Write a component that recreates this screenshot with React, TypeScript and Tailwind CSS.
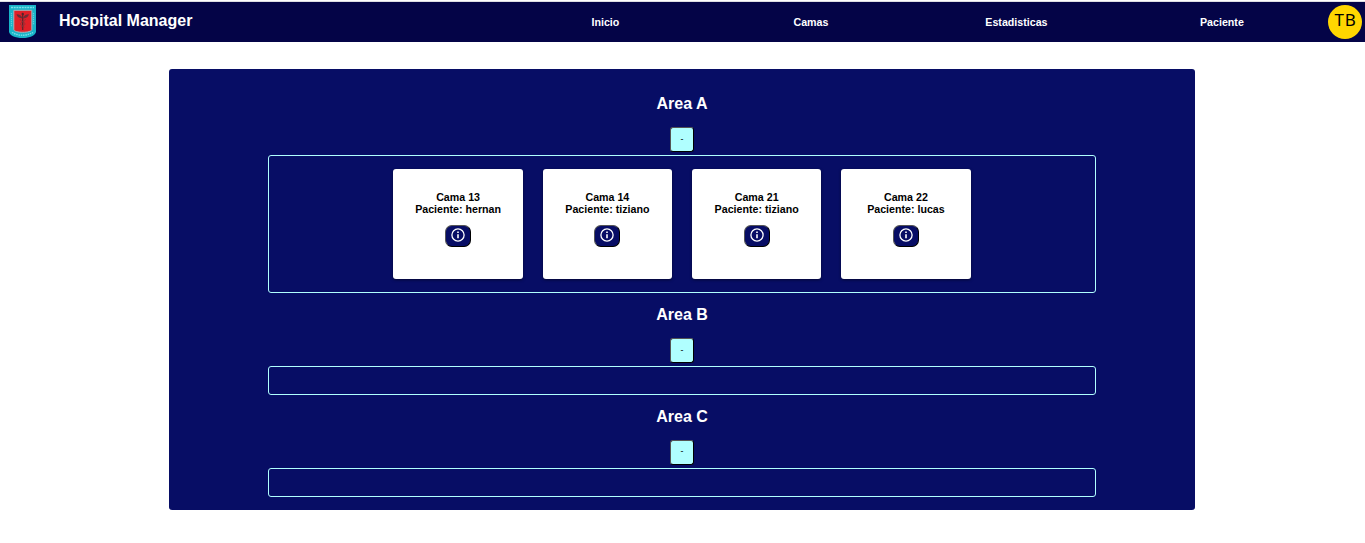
type Bed = { id: number; patient: string };

const areas: { name: string; top: string; gap: string; boxGap: string; beds: Bed[] }[] = [
  {
    name: "Area A",
    top: "pt-[25px]",
    gap: "mt-[13px]",
    boxGap: "mt-[3px]",
    beds: [
      { id: 13, patient: "hernan" },
      { id: 14, patient: "tiziano" },
      { id: 21, patient: "tiziano" },
      { id: 22, patient: "lucas" },
    ],
  },
  { name: "Area B", top: "pt-[12px]", gap: "mt-[13px]", boxGap: "mt-[3px]", beds: [] },
  { name: "Area C", top: "pt-[12px]", gap: "mt-[12.500px]", boxGap: "mt-[3.500px]", beds: [] },
];

const links = ["Inicio", "Camas", "Estadisticas", "Paciente"];

function Crest() {
  return (
    <svg width="28" height="34" viewBox="0 0 28 34" className="shrink-0" aria-hidden="true">
      <path d="M0 0h27v26.500c0 3.800-6.200 6.500-13.500 6.500S0 30.300 0 26.500z" fill="#18b4c8" />
      <path d="M2 2.500h23" stroke="#7cdfe8" strokeWidth="1.600" strokeDasharray="2 .7" />
      <path d="M2.500 8v14M24.500 8v12" stroke="#5fcfdc" strokeWidth="1.200" strokeDasharray="1.200 .8" />
      <path d="M3 27.500Q13.500 33 24 27.500" fill="none" stroke="#7cdfe8" strokeWidth="1.400" strokeDasharray="1.500 .8" />
      <path d="M4.800 5.300h18v19.200c0 1.800-4.500 2.800-9 2.800s-9-1-9-2.800z" fill="#e02028" stroke="#a9b3ba" strokeWidth="1" />
      <path d="M13.700 9v16" stroke="#5f252b" strokeWidth="1.300" />
      <path d="M13.200 12.500c-1.200-2.500-3.600-3.400-5.700-3.200.6 2.400 2.500 3.900 5.700 4.200zM14.200 12.500c1.200-2.500 3.600-3.400 5.700-3.200-.6 2.400-2.500 3.900-5.700 4.200z" fill="#6b2d35" />
      <path d="M11 14c0 3 5.300 2.500 5.100 5-.2 2-3.800 1.500-3.800 3.500M16.500 14c0 3-5.300 2.500-5.100 5 .2 2 3.800 1.500 3.800 3.500" fill="none" stroke="#8a333a" strokeWidth=".8" />
      <circle cx="13.700" cy="9" r="1.200" fill="#51232a" />
    </svg>
  );
}

function InfoIcon() {
  return (
    <svg width="14" height="14" viewBox="0 0 14 14" aria-hidden="true">
      <circle cx="7" cy="7" r="6.100" fill="none" stroke="#fff" strokeWidth="1.300" />
      <path d="M7 6.200v4" stroke="#fff" strokeWidth="1.600" />
      <path d="M7 3.600v1.400" stroke="#fff" strokeWidth="1.600" />
    </svg>
  );
}

function BedCard({ id, patient }: Bed) {
  return (
    <article className="flex h-[110px] w-[129.600px] flex-col items-center rounded-[3px] bg-white pt-[22px] text-center text-[10.670px] leading-[12px] font-bold text-black shadow-[0_1px_3px_rgba(0,0,0,0.5)]">
      <p>Cama {id}</p>
      <p>Paciente: {patient}</p>
      <button
        aria-label="Info"
        className="mt-[10px] flex h-[22px] w-[26px] items-start justify-center rounded-[7px] border border-t-[#555] border-r-black border-b-black border-l-[#555] bg-[#070d65] pt-[2px]"
      >
        <InfoIcon />
      </button>
    </article>
  );
}

export default function App() {
  return (
    <div className="h-[543px] overflow-hidden bg-white pt-px font-['Liberation_Sans',Arial,sans-serif]">
      <header className="flex h-[41px] items-center border-t border-[#dedee2] bg-[#040447] pr-[3px] pl-[9px] text-white">
        <Crest />
        <h1 className="ml-[22px] w-[443.700px] pb-[2px] text-[16px] leading-[18px] font-bold">Hospital Manager</h1>
        <nav className="grid w-[822px] grid-cols-4 text-center text-[10.670px] leading-[12px] font-bold">
          {links.map((link) => (
            <a key={link}>{link}</a>
          ))}
        </nav>
        <div className="ml-auto flex size-[34px] shrink-0 items-center justify-center rounded-full bg-[#ffd600] pb-[4px] text-black">
          <span className="pl-px font-['Noto_Sans',sans-serif] text-[17px] leading-[20px] tracking-[0.8px]">TB</span>
        </div>
      </header>
      <main className="mt-[27px] ml-[169px] h-[441px] w-[1026px] rounded-[3px] bg-[#070d65]">
        {areas.map(({ name, top, gap, boxGap, beds }) => (
          <section key={name} className={`flex flex-col items-center ${top}`}>
            <h2 className="text-[16px] leading-[20px] font-bold text-white">{name}</h2>
            <button
              className={`${gap} h-[25px] w-[24px] rounded-[3px] border border-t-[#555] border-r-black border-b-black border-l-[#555] bg-[#b0ffff] pb-[2px] text-[8.900px] leading-[20px] text-black`}
            >
              -
            </button>
            <div
              className={`${boxGap} flex w-[828px] justify-center gap-[19.700px] rounded-[3px] border border-[#b0ffff] ${
                beds.length ? "h-[138px] pt-[13px]" : "h-[29px]"
              }`}
            >
              {beds.map((bed) => (
                <BedCard key={bed.id} {...bed} />
              ))}
            </div>
          </section>
        ))}
      </main>
    </div>
  );
}
